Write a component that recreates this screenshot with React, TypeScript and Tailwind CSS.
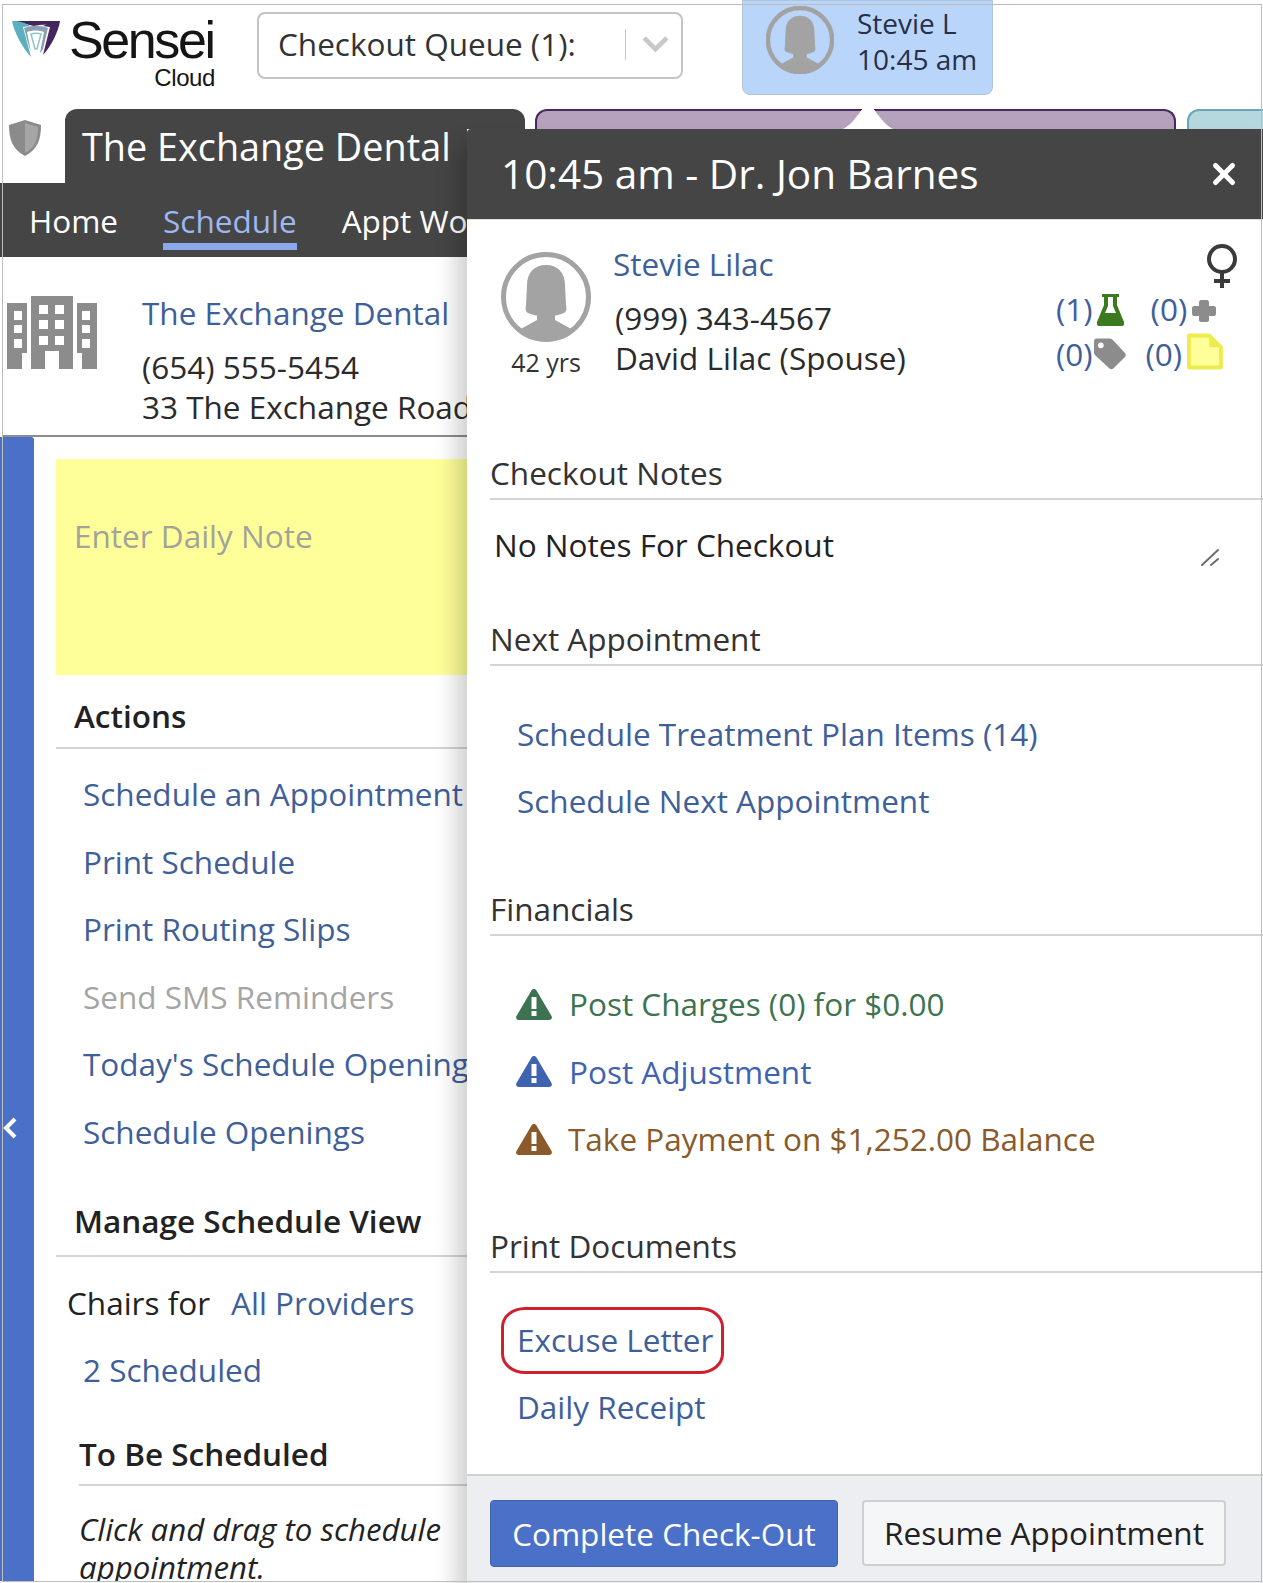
import { X } from 'lucide-react';

const actionLinks = [
  { label: 'Schedule an Appointment', muted: false },
  { label: 'Print Schedule', muted: false },
  { label: 'Print Routing Slips', muted: false },
  { label: 'Send SMS Reminders', muted: true },
  { label: "Today's Schedule Openings", muted: false },
  { label: 'Schedule Openings', muted: false },
];

function Avatar({ className, ring = '#a3a3a3', width = 5 }: { className: string; ring?: string; width?: number }) {
  return (
    <svg viewBox="0 0 90 90" className={className}>
      <defs>
        <clipPath id="avatar-clip">
          <ellipse cx="45" cy="45" rx="42" ry="42" />
        </clipPath>
      </defs>
      <ellipse cx="45" cy="45" rx="42.5" ry="42.5" fill="#fff" fillOpacity="0" stroke={ring} strokeWidth={width} />
      <g clipPath="url(#avatar-clip)" fill="#a3a3a3">
        <path d="M45 13c-12 0-19 8-19 20l-1 20c-1 5 0 7 2 8 5 2 9 3 13 3h10c4 0 8-1 13-3 2-1 3-3 2-8l-1-20c0-12-7-20-19-20z" />
        <path d="M36 62h18v6l20 11 6 11H10l6-11 20-11z" />
      </g>
    </svg>
  );
}

function Logo() {
  return (
    <div className="relative w-[204px] h-[90px] font-['Liberation_Sans',sans-serif]">
      <svg viewBox="0 0 48 38" className="absolute left-0 top-[20px] w-[48px] h-[38px]">
        <path d="M0 1h48l-4 5c-8-2-16-1-22 0L0 1z" fill="#43245f" />
        <path d="M0 1c8 0 14 2 18 5l-7 1 8 30C10 27 2 12 0 1z" fill="#5bb0c0" />
        <path d="M48 1c-1 9-9 26-17 34l7-28-7-1c6-3 12-5 17-5z" fill="#43245f" />
        <path d="M12 8c8-3 16-3 24 0l-5 21c-1 2-2 3-3 4l4-21c-6-2-11-2-17 0l4 20C16 25 14 15 12 8z" fill="#8a9fb0" />
        <path d="M19 14c4-1 7-1 10 0l-4 15h-2l-4-15z" fill="none" stroke="#8fc5cf" strokeWidth="1.5" />
      </svg>
      <span className="absolute left-[57px] top-[15px] text-[52px] leading-[50px] tracking-[-2.4px] text-[#151515]">Sensei</span>
      <span className="absolute right-[1px] top-[65px] text-[24px] leading-[26px] tracking-[-0.4px] text-[#151515]">Cloud</span>
    </div>
  );
}

function Shield() {
  return (
    <svg viewBox="0 0 32 36" className="w-[32px] h-[36px]">
      <path d="M16 0l16 5c0 14-3 24-16 31C3 29 0 19 0 5z" fill="#8b8b8b" />
      <path d="M16 3l13 4c0 12-3 21-13 26z" fill="#a6a6a6" />
    </svg>
  );
}

function Building() {
  return (
    <svg viewBox="0 0 90 73" className="w-[90px] h-[73px]">
      <path
        fill="#8c8c8c"
        fillRule="evenodd"
        d="M0 7h20v50h-5v16H0zM24 0h42v73H52V55H38v18H24zM70 7h20v66H75V57h-5z M7 15v9h8v-9zM7 29v8h8v-8zM7 43v9h8v-9zM32 9v9h9V9zM48 9v9h9V9zM32 24v9h9v-9zM48 24v9h9v-9zM32 40v9h9v-9zM48 40v9h9v-9zM75 15v9h8v-9zM75 29v8h8v-8zM75 43v9h8v-9z"
      />
    </svg>
  );
}

function Warning({ color }: { color: string }) {
  return (
    <svg viewBox="0 0 36 32" className="w-[36px] h-[32px] shrink-0">
      <path d="M18 1c1 0 2 .6 2.500 1.500L35.500 28c1 2 0 4-2.500 4H3c-2.500 0-3.500-2-2.500-4L15.500 2.500C16 1.600 17 1 18 1z" fill={color} />
      <rect x="15.500" y="9" width="5" height="12" fill="#fff" />
      <rect x="15.500" y="23" width="5" height="5" fill="#fff" />
    </svg>
  );
}

function SectionHeading({ children }: { children: string }) {
  return (
    <div className="ml-[23px] h-[45px] border-b-2 border-[#d4d4d4] text-[31.500px] leading-[36px] text-[#333]">{children}</div>
  );
}

function PatientBlock() {
  return (
    <div className="h-[235px] pl-[34px] pr-[40px] flex">
      <div className="w-[90px] pt-[32px] flex flex-col items-center">
        <Avatar className="w-[90px] h-[90px]" />
        <span className="mt-[4px] text-[25px] leading-[32px] text-[#333]">42 yrs</span>
      </div>
      <div className="ml-[24px] pt-[22px] text-[31.500px]">
        <div className="ml-[-2px] leading-[44px] text-[#3f5f9a]">Stevie Lilac</div>
        <div className="mt-[12px] leading-[40px] text-[#2b2b2b] whitespace-nowrap">(999) 343-4567</div>
        <div className="leading-[40px] text-[#2b2b2b] whitespace-nowrap">David Lilac (Spouse)</div>
      </div>
      <div className="ml-auto flex flex-col items-end pt-[24px]">
        <svg viewBox="0 0 30 44" className="w-[30px] h-[44px] mr-[-14px]" fill="none" stroke="#3a3a3a" strokeWidth="4">
          <ellipse cx="15" cy="15" rx="13" ry="13" />
          <path d="M15 28v16M7 37h16" />
        </svg>
        <div className="mt-[-3px] w-[167px] text-[31.500px] leading-[40px] text-[#3f5f9a]">
          <div className="flex items-center h-[47px]">
            <span>(1)</span>
            <svg viewBox="0 0 27 32" className="ml-[4px] w-[27px] h-[32px] mt-[2px]">
              <path d="M5 0h17v3h-2v8l7 17c1 2 0 4-3 4H3c-3 0-4-2-3-4l7-17V3H5z" fill="#3d7a1f" />
              <path d="M11 3h5v9l3 7H8l3-7z" fill="#fff" />
            </svg>
            <span className="ml-[27px]">(0)</span>
            <svg viewBox="0 0 24 22" className="ml-[5px] w-[24px] h-[22px] mt-[4px]" fill="#8c8c8c">
              <path d="M7 2c0-1 1-2 2-2h6c1 0 2 1 2 2v4h5c1 0 2 1 2 2v6c0 1-1 2-2 2h-5v4c0 1-1 2-2 2H9c-1 0-2-1-2-2v-4H2c-1 0-2-1-2-2V8c0-1 1-2 2-2h5z" />
            </svg>
          </div>
          <div className="flex items-center h-[44px]">
            <span>(0)</span>
            <svg viewBox="0 0 33 32" className="w-[33px] h-[32px] ml-[1px]">
              <path
                fill="#8c8c8c"
                fillRule="evenodd"
                d="M3 0h13c1 0 2 .5 3 1l13 14c1 1 1 3 0 4L20 31c-1 1-3 1-4 0L2 18c-1-1-2-2-2-3V3c0-2 1-3 3-3zM7 4a3 3 0 1 0 0 6 3 3 0 0 0 0-6z"
              />
            </svg>
            <span className="ml-[20px]">(0)</span>
            <svg viewBox="0 0 37 37" className="ml-[5px] w-[37px] h-[37px] mt-[-5px]">
              <path d="M2 2h21l12 12v21H2z" fill="#ffff99" stroke="#ecec4f" strokeWidth="4" strokeLinejoin="round" />
              <path d="M23 2v12h12z" fill="#ecec4f" />
            </svg>
          </div>
        </div>
      </div>
    </div>
  );
}

function CheckoutPanel() {
  return (
    <div className="absolute left-[467px] top-[129px] right-0 bottom-0 flex flex-col bg-white shadow-[-10px_16px_22px_rgba(0,0,0,0.2)]">
      <div className="h-[91px] shrink-0 flex items-center justify-between bg-[#454545] rounded-tl-[4px] pl-[34px] pr-[22px] border-b border-[#ddd]">
        <span className="text-[40.500px] leading-[48px] text-white">10:45 am - Dr. Jon Barnes</span>
        <X className="w-[34px] h-[34px] text-white" strokeWidth={3.5} />
      </div>
      <PatientBlock />

      <SectionHeading>Checkout Notes</SectionHeading>
      <div className="h-[121px] pl-[27px] pr-[44px] pt-[23px] flex justify-between">
        <span className="text-[31.500px] leading-[44px] text-[#222]">No Notes For Checkout</span>
        <svg viewBox="0 0 18 17" className="w-[18px] h-[17px] mt-[26px]" stroke="#6e6e6e" strokeWidth="2" strokeLinecap="round">
          <path d="M1 16L17 1M10 16l7-6" />
        </svg>
      </div>

      <SectionHeading>Next Appointment</SectionHeading>
      <div className="h-[225px] pl-[50px] pt-[34px] text-[31.500px] leading-[67px] text-[#3f5f9a]">
        <div>Schedule Treatment Plan Items (14)</div>
        <div>Schedule Next Appointment</div>
      </div>

      <SectionHeading>Financials</SectionHeading>
      <div className="h-[292px] pl-[49px] pt-[34px] text-[31.500px]">
        <div className="flex items-center h-[67.500px] gap-[17px] text-[#3d7350]">
          <Warning color="#3d7350" />
          <span>Post Charges (0) for $0.00</span>
        </div>
        <div className="flex items-center h-[67.500px] gap-[17px] text-[#3f63b0]">
          <Warning color="#3f63b0" />
          <span>Post Adjustment</span>
        </div>
        <div className="flex items-center h-[67.500px] gap-[16px] text-[#8a5a2b]">
          <Warning color="#8a5a2b" />
          <span>Take Payment on $1,252.00 Balance</span>
        </div>
      </div>

      <SectionHeading>Print Documents</SectionHeading>
      <div className="flex-1 pl-[50px] pt-[33px] text-[31.500px] leading-[67px] text-[#3f5f9a]">
        <div className="relative w-fit">
          Excuse Letter
          <span className="absolute left-[-16px] right-[-11px] top-[1px] bottom-[-1px] border-[3px] border-[#d0202e] rounded-[24px/20px]" />
        </div>
        <div>Daily Receipt</div>
      </div>

      <div className="h-[109px] shrink-0 flex items-start gap-[24px] pl-[23px] pt-[24px] bg-[#eceef2] border-t-2 border-[#d0d0d0]">
        <button className="w-[348px] h-[67px] rounded-[4px] bg-[#4a70c8] border border-[#3f63b0] text-[31.500px] text-white">Complete Check-Out</button>
        <button className="w-[364px] h-[66px] rounded-[4px] bg-[#f5f6f8] border-2 border-[#cfcfcf] text-[31.500px] text-[#222]">Resume Appointment</button>
      </div>
    </div>
  );
}

export default function App() {
  return (
    <div className="relative w-[1263px] h-[1583px] overflow-hidden bg-white font-['Open_Sans','Noto_Sans',sans-serif]">
      {/* top row */}
      <div className="h-[109px] flex items-start pl-[12px]">
        <Logo />
        <div className="ml-[41px] mt-[12px] w-[426px] h-[67px] rounded-[8px] border-2 border-[#c4c4c4] flex items-center pl-[19px] pr-[12px] pb-[3px]">
          <span className="flex-1 text-[31.500px] text-[#333]">Checkout Queue (1):</span>
          <span className="w-px h-[31px] bg-[#c8c8c8]" />
          <svg viewBox="0 0 28 18" className="ml-[16px] w-[27px] h-[17px]" fill="none" stroke="#c9c9c9" strokeWidth="5">
            <path d="M2 2l12 12L26 2" />
          </svg>
        </div>
        <div className="ml-[59px] w-[251px] h-[95px] rounded-b-[8px] bg-[#bad5fa] border border-[#b0c4dc] flex pl-[23px]">
          <Avatar className="mt-[5px] w-[68px] h-[68px]" width={6} />
          <div className="ml-[23px] pt-[4px] text-[28px] leading-[36px] text-[#26304a]">
            <div>Stevie L</div>
            <div>10:45 am</div>
          </div>
        </div>
      </div>

      {/* tabs */}
      <div className="h-[74px] flex pl-[9px] overflow-hidden">
        <div className="w-[56px] shrink-0 pt-[11px]">
          <Shield />
        </div>
        <div className="w-[460px] shrink-0 rounded-t-[12px] bg-[#454545] pl-[17px] pt-[13px] text-[37.800px] leading-[50px] text-white whitespace-nowrap">The Exchange Dental</div>
        <div className="ml-[10px] w-[641px] shrink-0 rounded-t-[12px] bg-[#b7a2bd] border-2 border-b-0 border-[#4a2a5e]" />
        <div className="ml-[11px] w-[90px] shrink-0 rounded-t-[12px] bg-[#b5d8de] border-2 border-b-0 border-[#6aa6b5]" />
      </div>

      {/* nav */}
      <div className="h-[74px] bg-[#454545] flex pl-[29px] text-[31.500px] text-white">
        <span className="pt-[16px] leading-[44px]">Home</span>
        <span className="ml-[45px] h-[67px] pt-[16px] leading-[44px] text-[#9db7ef] border-b-[7px] border-[#8aa9ea]">Schedule</span>
        <span className="ml-[45px] pt-[16px] leading-[44px] whitespace-nowrap">Appt Work</span>
      </div>

      {/* practice info */}
      <div className="ml-[2px] h-[180px] border-b-2 border-[#8c8c8c] flex pl-[5px]">
        <div className="pt-[39px]">
          <Building />
        </div>
        <div className="ml-[45px] pt-[34px] whitespace-nowrap text-[31.500px] leading-[40px] text-[#2b2b2b]">
          <div className="text-[#3f5f9a] leading-[44px]">The Exchange Dental</div>
          <div className="mt-[12px]">(654) 555-5454</div>
          <div>33 The Exchange Road</div>
        </div>
      </div>

      {/* sidebar + left column */}
      <div className="flex h-[1144px] overflow-hidden">
        <div className="w-[34px] shrink-0 rounded-tr-[3px] bg-[#4a70c8] pt-[680px] pl-[3px]">
          <svg viewBox="0 0 14 22" className="w-[14px] h-[22px]" fill="none" stroke="#fff" strokeWidth="4">
            <path d="M12 2L3 11l9 9" />
          </svg>
        </div>
        <div className="w-[500px] ml-[22px] pt-[22px] text-[31.500px]">
          <div className="w-[445px] h-[216px] bg-[#ffff99] pl-[18px] pt-[55px] leading-[44px] text-[#a3a39a]">Enter Daily Note</div>

          <div className="h-[74px] pl-[18px] pt-[19px] border-b-2 border-[#d4d4d4] leading-[44px] font-semibold text-[#222]">Actions</div>
          <div className="pl-[27px] pt-[11px] text-[#3f5f9a] whitespace-nowrap">
            {actionLinks.map((link) => (
              <div key={link.label} className={`h-[67.600px] leading-[67px] ${link.muted ? 'text-[#a5a5a5]' : ''}`}>
                {link.label}
              </div>
            ))}
          </div>

          <div className="mt-[23px] h-[68px] pl-[18px] pt-[10px] border-b-2 border-[#d4d4d4] leading-[44px] font-semibold text-[#222]">Manage Schedule View</div>
          <div className="h-[96px] pl-[11px] pt-[12px] flex leading-[67px]">
            <span className="text-[#222]">Chairs for</span>
            <span className="ml-[21px] text-[#3f5f9a]">All Providers</span>
          </div>
          <div className="h-[34px] pl-[27px] leading-[34px] text-[#3f5f9a]">2 Scheduled</div>

          <div className="ml-[23px] mt-[32px] h-[67px] pt-[13px] border-b-2 border-[#d4d4d4] leading-[44px] font-semibold text-[#222]">To Be Scheduled</div>
          <div className="ml-[23px] w-[400px] pt-[24px] text-[31.200px] leading-[38px] italic text-[#222]">Click and drag to schedule appointment.</div>
        </div>
      </div>

      <CheckoutPanel />

      {/* arrow from queue card to panel */}
      <svg viewBox="0 0 50 25" className="absolute left-[843px] top-[104px] w-[50px] h-[25px]">
        <path d="M0 25C8 21 14 12 21 3c2-3 6-3 8 0 7 9 13 18 21 22z" fill="#fff" />
      </svg>

      {/* screenshot frame */}
      <div className="absolute left-[2px] top-[4px] right-[1px] bottom-[1px] border border-[#bdbdbd] pointer-events-none" />
    </div>
  );
}
